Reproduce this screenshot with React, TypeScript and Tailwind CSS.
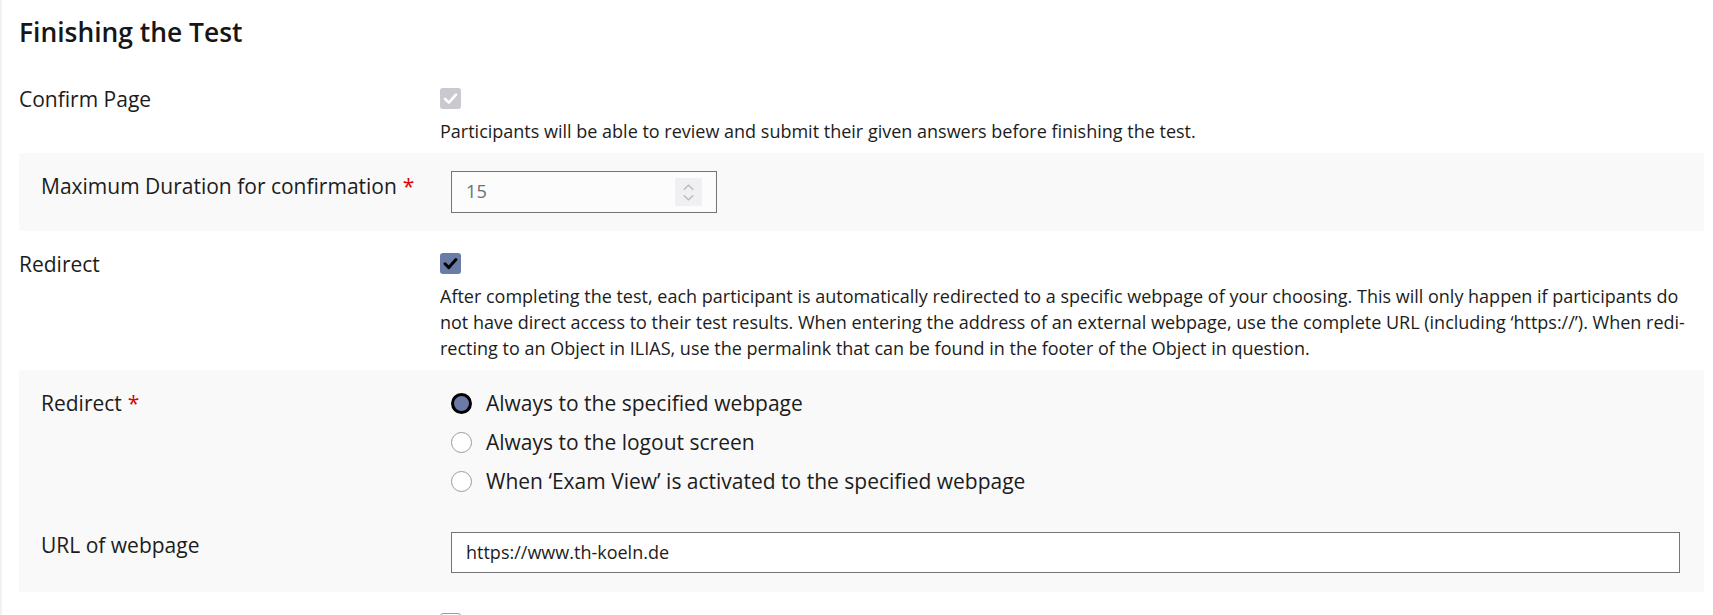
import React from "react";

function Check({ color, width }: { color: string; width: number }) {
  return (
    <svg viewBox="0 0 21 21" className="w-[21px] h-[21px]">
      <path d="M5 10.8 L8.8 14.6 L16 6.6" fill="none" stroke={color} strokeWidth={width} strokeLinecap="round" strokeLinejoin="round" />
    </svg>
  );
}

function DisabledCheckbox() {
  return (
    <div className="w-[21px] h-[21px] rounded-[3px] bg-[#c9c9cf]">
      <Check color="#ffffff" width={2.6} />
    </div>
  );
}

function CheckedCheckbox() {
  return (
    <div className="w-[21px] h-[21px] rounded-[3px] bg-[#6b7ba8]">
      <Check color="#000000" width={3} />
    </div>
  );
}

function Radio({ checked }: { checked?: boolean }) {
  if (checked) {
    return <div className="w-[21px] h-[21px] rounded-full border-[3px] border-black bg-[#6b7ba8] shrink-0" />;
  }
  return <div className="w-[21px] h-[21px] rounded-full border border-[#9a9aa6] bg-white shrink-0" />;
}

function Req() {
  return <span className="text-[#dd0000] ml-[6px]">*</span>;
}

export default function App() {
  return (
    <div className="min-h-[615px] bg-white border-l-2 border-[#f1f1f1] pl-[17px] pr-[9px] pt-[17px] text-[#1c1c1c] font-['Open_Sans',sans-serif] overflow-hidden">
      <h2 className="text-[26.4px] leading-[31px] font-semibold text-[#161616]">Finishing the Test</h2>

      {/* Confirm Page */}
      <div className="mt-[36px] flex">
        <div className="w-[421px] shrink-0 text-[21px] leading-[30px]">Confirm Page</div>
        <div className="flex-1">
          <div className="mt-[4px]">
            <DisabledCheckbox />
          </div>
          <div className="mt-[9px] text-[18px] leading-[26px]">
            Participants will be able to review and submit their given answers before finishing the test.
          </div>
        </div>
      </div>

      {/* Maximum Duration panel */}
      <div className="mt-[9px] bg-[#f9f9f9] flex pl-[22px] pr-[24px] pt-[18px] pb-[18px]">
        <div className="w-[410px] shrink-0 text-[21px] leading-[30px]">
          Maximum Duration for confirmation<Req />
        </div>
        <div className="flex-1">
          <div className="w-[266px] h-[42px] border border-[#757575] bg-[#fcfcfc] flex items-center pl-[14px] text-[18.2px] text-[#6f6f6f]">
            <span>15</span>
            <div className="ml-auto mr-[14px] w-[27px] h-[28px] bg-[#f0f0f3] flex flex-col items-center justify-center gap-[3px]">
              <svg viewBox="0 0 14 8" className="w-[13px] h-[7px]">
                <path d="M1.5 6.5 L7 1.5 L12.5 6.5" fill="none" stroke="#b9b9c4" strokeWidth="1.6" />
              </svg>
              <svg viewBox="0 0 14 8" className="w-[13px] h-[7px]">
                <path d="M1.5 1.5 L7 6.5 L12.5 1.5" fill="none" stroke="#b9b9c4" strokeWidth="1.6" />
              </svg>
            </div>
          </div>
        </div>
      </div>

      {/* Redirect */}
      <div className="mt-[18px] flex">
        <div className="w-[421px] shrink-0 text-[21px] leading-[30px]">Redirect</div>
        <div className="flex-1">
          <div className="mt-[4px]">
            <CheckedCheckbox />
          </div>
          <div className="mt-[9px] text-[18px] leading-[26px] whitespace-nowrap">
            After completing the test, each participant is automatically redirected to a specific webpage of your choosing. This will only happen if participants do
            <br />
            not have direct access to their test results. When entering the address of an external webpage, use the complete URL (including ‘https://’). When redi-
            <br />
            recting to an Object in ILIAS, use the permalink that can be found in the footer of the Object in question.
          </div>
        </div>
      </div>

      {/* Redirect options panel */}
      <div className="mt-[9px] bg-[#f9f9f9] pl-[22px] pr-[24px] pt-[18px] pb-[19px]">
        <div className="flex">
          <div className="w-[410px] shrink-0 text-[21px] leading-[30px]">
            Redirect<Req />
          </div>
          <div className="flex-1 flex flex-col gap-[9px] text-[21px] leading-[30px]">
            <div className="flex items-center gap-[14px]">
              <Radio checked />
              <span>Always to the specified webpage</span>
            </div>
            <div className="flex items-center gap-[14px]">
              <Radio />
              <span>Always to the logout screen</span>
            </div>
            <div className="flex items-center gap-[14px]">
              <Radio />
              <span>When ‘Exam View’ is activated to the specified webpage</span>
            </div>
          </div>
        </div>
        <div className="mt-[34px] flex">
          <div className="w-[410px] shrink-0 text-[21px] leading-[30px]">URL of webpage</div>
          <div className="flex-1">
            <div className="mt-[2px] h-[41px] border border-[#757575] bg-white flex items-center pl-[14px] text-[18px] text-[#1c1c1c]">
              https://www.th-koeln.de
            </div>
          </div>
        </div>
      </div>

      {/* Next row (partially visible) */}
      <div className="mt-[17px] flex">
        <div className="w-[421px] shrink-0 text-[21px] leading-[30px]">&nbsp;</div>
        <div className="flex-1">
          <div className="mt-[4px] w-[21px] h-[21px] rounded-[3px] border border-[#9a9aa6] bg-white" />
        </div>
      </div>
    </div>
  );
}
